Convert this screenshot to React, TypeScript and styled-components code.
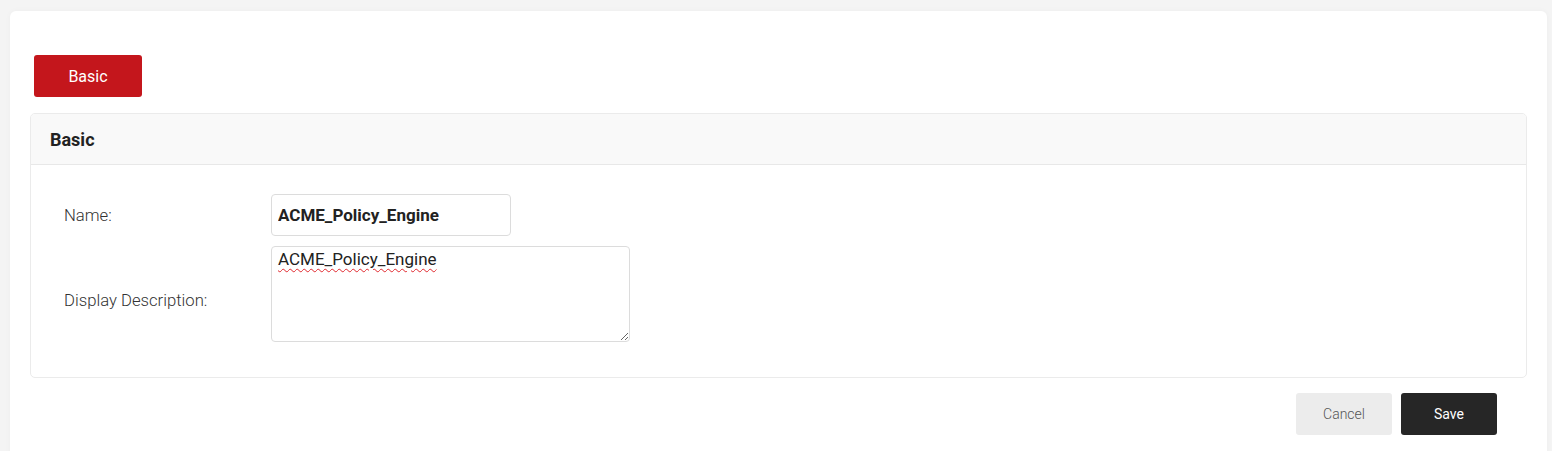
import React from 'react';
import styled, { createGlobalStyle } from 'styled-components';

const GlobalStyle = createGlobalStyle`
  html, body {
    margin: 0;
    padding: 0;
    background: #f4f4f4;
    font-family: Roboto, "Liberation Sans", Arial, sans-serif;
  }
  * { box-sizing: border-box; }
`;

const Page = styled.div`
  padding: 11px 5px 0 10px;
  height: 451px;
  overflow: hidden;
`;

const Card = styled.div`
  background: #fff;
  border-radius: 6px;
  padding: 44px 20px 40px;
  box-shadow: 0 0 6px rgba(0, 0, 0, 0.03);
`;

const TabButton = styled.button`
  display: block;
  width: 108px;
  height: 42px;
  margin: 0 0 16px 4px;
  border: none;
  border-radius: 3px;
  background: #c4161c;
  color: #fff;
  font-family: inherit;
  font-size: 16px;
  font-weight: 400;
  cursor: pointer;
`;

const Panel = styled.section`
  border: 1px solid #ebebeb;
  border-radius: 5px;
  overflow: hidden;
`;

const PanelHeader = styled.header`
  height: 51px;
  display: flex;
  align-items: center;
  padding: 0 19px;
  background: #f9f9f9;
  border-bottom: 1px solid #e8e8e8;
  font-size: 18px;
  font-weight: 700;
  color: #222;
`;

const PanelBody = styled.div`
  display: flex;
  flex-direction: column;
  gap: 10px;
  padding: 29px 33px 35px;
`;

const Row = styled.div`
  display: grid;
  grid-template-columns: 207px auto;
  align-items: center;
`;

const Label = styled.label<{ $offset?: number }>`
  font-size: 16.7px;
  font-weight: 300;
  color: #333;
  padding-top: ${(p) => p.$offset ?? 0}px;
`;

const TextInput = styled.input`
  width: 240px;
  height: 42px;
  border: 1px solid #dcdcdc;
  border-radius: 4px;
  padding: 0 6px;
  font-family: inherit;
  font-size: 17px;
  font-weight: 700;
  color: #222;
  outline: none;
`;

const TextArea = styled.textarea`
  width: 359px;
  height: 96px;
  border: 1px solid #dcdcdc;
  border-radius: 4px;
  padding: 2px 6px;
  font-family: inherit;
  font-size: 17px;
  color: #222;
  outline: none;
  text-decoration: underline wavy #e0282e;
  text-decoration-thickness: 1px;
  text-underline-offset: 3px;
  display: block;
`;

const Actions = styled.div`
  display: flex;
  justify-content: flex-end;
  gap: 9px;
  padding: 15px 30px 0 0;
`;

const ActionButton = styled.button<{ $primary?: boolean }>`
  width: 96px;
  height: 42px;
  border: none;
  border-radius: 3px;
  background: ${(p) => (p.$primary ? '#262626' : '#ececec')};
  color: ${(p) => (p.$primary ? '#fff' : '#555')};
  font-family: inherit;
  font-size: 14px;
  font-weight: ${(p) => (p.$primary ? 400 : 300)};
  cursor: pointer;
`;

export default function App() {
  return (
    <>
      <GlobalStyle />
      <Page>
        <Card>
          <TabButton>Basic</TabButton>
          <Panel>
            <PanelHeader>Basic</PanelHeader>
            <PanelBody>
              <Row>
                <Label>Name:</Label>
                <TextInput defaultValue="ACME_Policy_Engine" />
              </Row>
              <Row>
                <Label $offset={12}>Display Description:</Label>
                <TextArea defaultValue="ACME_Policy_Engine" spellCheck={false} />
              </Row>
            </PanelBody>
          </Panel>
          <Actions>
            <ActionButton>Cancel</ActionButton>
            <ActionButton $primary>Save</ActionButton>
          </Actions>
        </Card>
      </Page>
    </>
  );
}
